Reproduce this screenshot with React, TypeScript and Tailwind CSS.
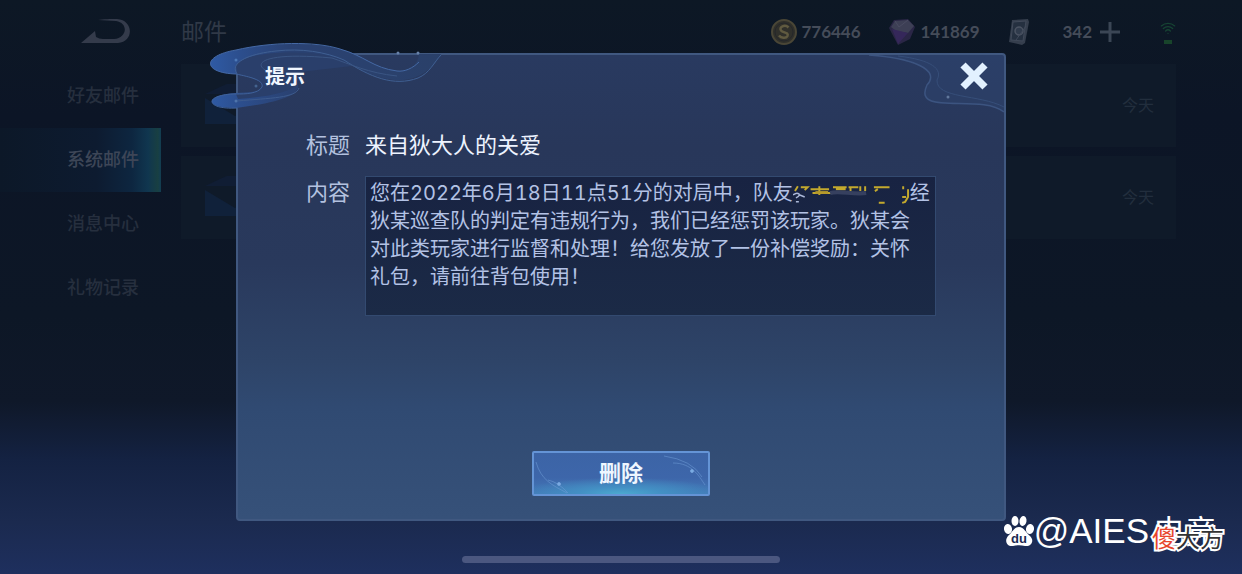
import clsx from "clsx";
import { Wifi, X } from "lucide-react";

const menu = [
  { id: "friends", label: "好友邮件" },
  { id: "system", label: "系统邮件" },
  { id: "news", label: "消息中心" },
  { id: "gifts", label: "礼物记录" },
];

const mails = [
  { id: 1, date: "今天" },
  { id: 2, date: "今天" },
];

function BackIcon() {
  return (
    <svg viewBox="0 0 50 26" className="w-[50px] h-[26px]" fill="#343b4b">
      <path d="M0 24 L14 12 L15 18 Q18 20 22 20 L33 20 C46 19 48 4 35 2 L17 1 C22 0 30 0 36 0 C53 1 53 23 37 24 Z" />
    </svg>
  );
}

function CoinIcon() {
  return (
    <svg viewBox="0 0 26 26" className="size-[26px]" fill="none">
      <circle cx="13" cy="13" r="12" fill="#30302b" stroke="#4a4636" strokeWidth="2" />
      <circle cx="13" cy="13" r="9" stroke="#25272a" strokeWidth="1" />
      <path d="M17.5 8.5C14 5 7.500 8 10 11.500C12 14 18 13 16.500 17C15 20 10 19 8 16.500" stroke="#605a40" strokeWidth="2.500" />
    </svg>
  );
}

function GemIcon() {
  return (
    <svg viewBox="0 0 28 26" className="w-7 h-[26px]">
      <path d="M1 9 L6 1 L20 0 L27 8 L22 20 L10 26 Z" fill="#2a2646" />
      <path d="M3 8 L7 2 L20 1 L26 7 L20 14 L8 12 Z" fill="#3d3f55" />
      <path d="M4 10 L20 14 L10 25 Z" fill="#35275a" />
      <path d="M7 2 L11 8 L20 1" stroke="#4a4b62" fill="none" />
    </svg>
  );
}

function CardIcon() {
  return (
    <svg viewBox="0 0 22 28" className="w-[22px] h-7">
      <path d="M4 2 L20 1 L21 4 L17 25 L14 27 L1 24 Z" fill="#353e4d" />
      <path d="M5 4 L18 3 L15 23 L3 22 Z" fill="#253040" stroke="#414a5a" />
      <circle cx="11" cy="13" r="4" fill="#303b4c" stroke="#4b5362" strokeWidth="1.500" />
      <path d="M8 22 L18 8" stroke="#414a5a" />
    </svg>
  );
}

function EnvelopeIcon() {
  return (
    <svg viewBox="0 0 60 40" className="w-[60px] h-10">
      <path d="M0 10 L30 -4 L60 10 Z" fill="#101d34" />
      <path d="M0 14 L30 32 L60 14 V40 H0 Z" fill="#10213a" />
    </svg>
  );
}

// clouds that hang over the left corner of the dialog
function CloudOrnament() {
  return (
    <svg viewBox="208 40 240 72" className="absolute -left-[30px] -top-[15px] w-[240px] h-[72px]" fill="none">
      <defs>
        <linearGradient id="cloud" gradientUnits="userSpaceOnUse" x1="208" y1="0" x2="440" y2="0">
          <stop offset="0" stopColor="#2f5ba6" />
          <stop offset="0.14" stopColor="#2c4e8d" />
          <stop offset="0.35" stopColor="#2a4273" />
          <stop offset="1" stopColor="#2a4069" />
        </linearGradient>
      </defs>
      <path d="M236 74 C203 73 201 56 236 50 C265 43 310 41 340 49 C365 55 372 68 397 71 C410 72 418 65 419 54 H441 C432 72 413 82 394 80 C361 76 352 59 323 58 C295 56 259 55 259 64 C260 73 302 77 298 88 C294 99 266 104 236 108 C205 109 202 95 236 93 C250 93 262 92 262 86 C261 78 246 76 236 74 Z" fill="url(#cloud)" />
      <path d="M236 66 C242 54 276 51 310 53 C330 55 345 60 352 66 L300 72 L298 84 C290 93 265 97 238 99 L236 94 C250 93 262 92 262 86 C261 78 246 76 237 75 Z" fill="#2a3f6b" />
      <path d="M236 74 C203 73 201 56 236 50 C270 42 315 41 340 49 C365 56 373 68 397 71 C405 72 413 68 419 62" stroke="#4468a4" />
      <path d="M238 75 C228 64 246 54 276 51 C301 48 326 52 344 60 C370 77 394 87 418 78 C430 73 434 62 441 55" stroke="#3f5f92" />
      <path d="M272 73 C250 66 257 51 332 58 C350 64 368 73 397 76" stroke="#3a5583" />
      <path d="M236 74 C250 77 264 80 262 87 C258 94 245 94 236 94 C204 94 204 110 237 108" stroke="#3f6199" />
      <path d="M237 101 C271 98 296 98 299 88" stroke="#3d5b8e" />
      <circle cx="236" cy="60" r="1.500" fill="#4d79b8" />
      <circle cx="256" cy="86" r="1.500" fill="#44638f" />
      <circle cx="236" cy="101" r="1.500" fill="#4d73ab" />
      <circle cx="398" cy="53" r="1.500" fill="#6781a8" />
      <circle cx="418" cy="53" r="1.500" fill="#6781a8" />
    </svg>
  );
}

function CornerOrnament() {
  return (
    <svg viewBox="870 54 135 60" className="absolute right-0 top-0 w-[135px] h-[60px]" fill="none">
      <path d="M874 54 C914 58 943 69 927 87 C913 115 983 93 1005 111 V54 Z" fill="#34507f" fillOpacity="0.25" />
      <path d="M870 54 C914 57 942 69 928 84 C913 116 982 92 1005 111" stroke="#3c5480" strokeWidth="1.500" />
      <path d="M899 55 C933 59 944 68 938 79 C937 98 980 93 1005 106" stroke="#364e79" />
      <circle cx="949" cy="96" r="1.500" fill="#61789c" />
    </svg>
  );
}

// the player's name is scribbled over
function HiddenName() {
  return (
    <svg viewBox="0 0 120 24" className="inline-block w-[117px] h-6 align-middle" fill="none">
      <g stroke="#c3a92e" strokeWidth="2">
        <path d="M5 3 L2 8 M8 4 H15 L12 7 M18 6 H37 M27 3 V12 M20 10 H39 M41 4 H55 M44 6 H54 M57 4 H67 M59 3 V8 M69 3 V8 M74 3 V8" />
        <path d="M83 4 H99 M87 6 L84 8 M88 20 H94 M113 3 V6 M118 6 V14 L115 19 L112 20 M112 14 H116" />
      </g>
      <path d="M23 8 H36 V11 H23 Z" fill="#b5992b" />
      <path d="M38 10 C47 7 62 12 75 10" stroke="#36405f" strokeWidth="4" />
      <path d="M0 12 C5 8 10 12 3 15 M7 12 L12 14 M3 19 H6" stroke="#acb9d9" strokeWidth="1.500" />
    </svg>
  );
}

function Sidebar() {
  return (
    <nav className="w-[161px] shrink-0">
      {menu.map((item) => (
        <a
          key={item.id}
          href={"#" + item.id}
          className={clsx(
            "flex h-16 items-center justify-end pb-1 pr-[22px] text-[18px] font-medium",
            item.id === "system"
              ? "bg-[linear-gradient(90deg,#0c1828_0%,#0d1b30_60%,#0d2640_82%,#10364f_92%,#183f42_98%,#123d52_100%)] text-[#3d4657]"
              : "text-[#262f3e]"
          )}
        >
          {item.label}
        </a>
      ))}
    </nav>
  );
}

function TopBar() {
  return (
    <header className="flex h-16 items-center pr-[66px] text-[#454c59]">
      <button type="button" aria-label="返回" className="ml-[81px]">
        <BackIcon />
      </button>
      <h1 className="ml-[50px] pb-1 text-[23px] text-[#303947]">邮件</h1>
      <div className="ml-auto flex items-center font-[Lato,'Noto_Sans_CJK_SC',sans-serif] text-[17px] font-bold">
        <CoinIcon />
        <span className="ml-1 w-[87px]">776446</span>
        <GemIcon />
        <span className="ml-1 w-[88px]">141869</span>
        <CardIcon />
        <span className="ml-8">342</span>
        <button type="button" aria-label="添加" className="ml-2">
          <svg viewBox="0 0 20 20" className="size-5" stroke="#3b4655" strokeWidth="3">
            <path d="M10 0 V20 M0 10 H20" />
          </svg>
        </button>
        <div className="ml-10 flex flex-col items-center gap-1 text-[#164333]">
          <Wifi className="size-4" />
          <span className="h-1 w-2 bg-[#18442b]" />
        </div>
      </div>
    </header>
  );
}

function MailDialog() {
  return (
    <section
      role="dialog"
      aria-labelledby="dialog-title"
      className="relative flex w-[62%] flex-col rounded-sm border-2 border-[#405880] bg-[linear-gradient(180deg,#293a60_0%,#28375a_20%,#29395c_45%,#2e4468_66%,#304a72_76%,#365179_100%)] pb-[23px]"
    >
      <CloudOrnament />
      <CornerOrnament />
      <header className="relative flex h-[42px] items-center justify-between pl-[27px] pr-2">
        <h2 id="dialog-title" className="text-[20px] font-bold text-[#f0f6ff]">提示</h2>
        <button type="button" aria-label="关闭" className="text-[#e2f1ff]">
          <X className="size-11" strokeWidth={4} strokeLinecap="butt" />
        </button>
      </header>
      <dl className="mt-8 grid grid-cols-[44px_1fr] gap-x-[15px] gap-y-[19px] px-[68px] text-[22px] leading-7">
        <dt className="text-[#b3c1df]">标题</dt>
        <dd className="text-[#edf3ff]">来自狄大人的关爱</dd>
        <dt className="text-[#b3c1df]">内容</dt>
        <dd className="min-h-[140px] whitespace-nowrap border border-[#334a70] bg-[linear-gradient(180deg,#182342,#1b2a46)] px-1 pt-0.5 font-[Inter,'Noto_Sans_CJK_SC',sans-serif] text-[20px] leading-7 text-[#b3c2e5]">
          <span className="tabular-nums">您在2022年6月18日11点51分的对局中，队友</span>
          <HiddenName />经<br />
          狄某巡查队的判定有违规行为，我们已经惩罚该玩家。狄某会<br />
          对此类玩家进行监督和处理！给您发放了一份补偿奖励：关怀<br />
          礼包，请前往背包使用！
        </dd>
      </dl>
      <button
        type="button"
        className="relative mt-[135px] h-[45px] w-[178px] self-center rounded-xs border-2 border-[#6494d6] bg-[radial-gradient(ellipse_60%_40%_at_bottom,#4caad0_0%,#4390c4_40%,transparent_100%),linear-gradient(180deg,#3c64a6_0%,#3d66aa_60%,#447ab8_100%)] pb-1 text-[22px] font-bold text-[#eef6ff]"
      >
        <svg viewBox="0 0 174 41" className="absolute inset-0 size-full" fill="none" stroke="#719fd9">
          <path d="M2 9 C7 27 18 32 33 40 M14 27 Q24 29 34 40 M130 3 Q158 7 168 24 M139 10 C158 10 165 23 171 32" strokeOpacity="0.5" />
          <circle cx="25" cy="31" r="1.500" fill="#7eb1e8" />
          <circle cx="158" cy="18" r="1.500" fill="#7eb1e8" />
        </svg>
        <span className="relative">删除</span>
      </button>
    </section>
  );
}

function Watermark() {
  return (
    <div className="absolute bottom-[21px] right-[25px] flex items-center text-white">
      <svg viewBox="0 0 30 32" className="w-[30px] h-8" fill="white">
        <ellipse cx="4" cy="14" rx="4" ry="5" transform="rotate(-10 4 14)" />
        <ellipse cx="11" cy="6" rx="3.500" ry="5" />
        <ellipse cx="19" cy="6" rx="3.500" ry="5" transform="rotate(8 19 6)" />
        <ellipse cx="26" cy="14" rx="4" ry="5" transform="rotate(10 26 14)" />
        <path d="M15 12 C20 12 22 18 26 21 C31 26 27 32 21 31 C17 30 13 30 9 31 C3 32 0 26 4 21 C8 18 10 12 15 12 Z" />
        <text x="15" y="28" textAnchor="middle" fontSize="13" fontWeight="700" fontFamily="Liberation Sans, sans-serif" fill="#1c2b52">du</text>
      </svg>
      <span className="mr-1 font-['Liberation_Sans','Noto_Sans_CJK_SC',sans-serif] text-[35px] leading-[44px]">@AIES</span>
      <span className="pb-1 text-[32px] leading-[40px]">电竞</span>
      <span className="absolute -right-[7px] top-2.5 text-[24px] leading-9 text-[#333] [-webkit-text-stroke:4px_white] [paint-order:stroke_fill]">
        <span className="text-[#e8452c]">傻</span>大方
      </span>
    </div>
  );
}

export default function App() {
  return (
    <div className="relative min-h-screen overflow-hidden bg-[linear-gradient(180deg,#0d1825_0%,#0c1526_20%,#0d1726_55%,#0f1829_70%,#142242_80%,#1b2a4f_91%,#1e2f5e_100%)] font-['Noto_Sans_CJK_SC',sans-serif]">
      <TopBar />
      <div className="flex">
        <Sidebar />
        <main className="ml-5 mr-[66px] flex flex-1 flex-col gap-[9px]">
          {mails.map((mail) => (
            <article key={mail.id} className="flex h-[83px] items-center justify-between bg-[#0f1a29] pb-1 pl-6 pr-[22px] text-[16px] text-[#222e3d]">
              <EnvelopeIcon />
              <time>{mail.date}</time>
            </article>
          ))}
        </main>
      </div>
      <div className="absolute inset-0 flex items-center justify-center">
        <MailDialog />
      </div>
      <div className="absolute inset-x-0 bottom-[11px] flex justify-center">
        <span className="h-[7px] w-[318px] rounded-full bg-[#4b5780]" />
      </div>
      <Watermark />
    </div>
  );
}
